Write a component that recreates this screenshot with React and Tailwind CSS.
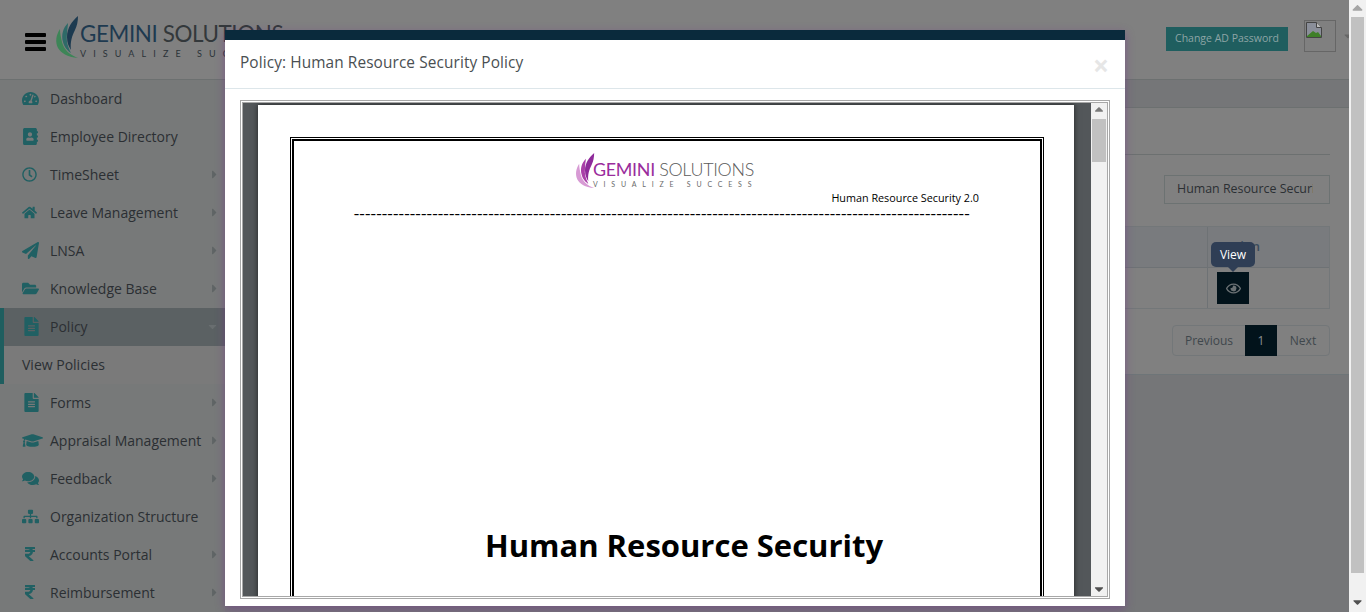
import React from "react";
import {
  FaTachometerAlt, FaAddressBook, FaRegClock, FaHome, FaPaperPlane, FaFolderOpen, FaFileAlt,
  FaGraduationCap, FaComments, FaSitemap, FaRupeeSign, FaRegEye, FaCaretRight, FaCaretDown,
} from "react-icons/fa";

const items = [
  { label: "Dashboard", Icon: FaTachometerAlt, size: "text-[17px]" },
  { label: "Employee Directory", Icon: FaAddressBook, size: "text-[17px]" },
  { label: "TimeSheet", Icon: FaRegClock, size: "text-[15px]", caret: true },
  { label: "Leave Management", Icon: FaHome, size: "text-[15px]", caret: true },
  { label: "LNSA", Icon: FaPaperPlane, size: "text-[17px]", caret: true },
  { label: "Knowledge Base", Icon: FaFolderOpen, size: "text-[17px]", caret: true },
  { label: "Policy", Icon: FaFileAlt, size: "text-[19px]", open: true },
  { label: "Forms", Icon: FaFileAlt, size: "text-[19px]", caret: true },
  { label: "Appraisal Management", Icon: FaGraduationCap, size: "text-[21px]", caret: true },
  { label: "Feedback", Icon: FaComments, size: "text-[17px]", caret: true },
  { label: "Organization Structure", Icon: FaSitemap, size: "text-[17px]" },
  { label: "Accounts Portal", Icon: FaRupeeSign, size: "text-[16px]", caret: true },
  { label: "Reimbursement", Icon: FaRupeeSign, size: "text-[16px]", caret: true },
];

function Feather({ className, c1, c2, c3 }) {
  return (
    <svg viewBox="0 0 24 42" className={className}>
      <path d="M23 0C17 5 12 12 12 21c0 6 2 10 4 13-1-8 1-14 4-20 2-4 3-9 3-14z" fill={c1} />
      <path d="M13 7C8 12 6 19 8 26c1 5 5 9 8 11-3-6-5-12-4-19 0-4 1-8 1-11z" fill={c2} />
      <path d="M5 13C1 19 0 26 3 32c3 5 9 9 20 10-8-3-14-8-16-16-1-4-2-9-2-13z" fill={c3} />
    </svg>
  );
}

function SideItem({ label, Icon, size, caret, open }) {
  return (
    <div className={`h-[38px] pb-[2px] flex items-center ${open ? "bg-[#5b6163] border-l-4 border-[#1f5e5f] pl-[18px]" : "pl-[22px]"}`}>
      <span className="w-[28px] flex items-center shrink-0">
        <Icon className={`text-[#206063] ${size}`} />
      </span>
      <span className="text-[14px] text-[#2b2f33] whitespace-nowrap">{label}</span>
      {caret && <FaCaretRight className="ml-auto mr-[4px] text-[#5f6465] text-[13px] shrink-0" />}
      {open && <FaCaretDown className="ml-auto mr-[6px] text-[#696e70] text-[13px] shrink-0" />}
    </div>
  );
}

function Sidebar() {
  return (
    <aside className="w-[225px] shrink-0 bg-[#777979] overflow-hidden">
      {items.slice(0, 7).map((it) => <SideItem key={it.label} {...it} />)}
      <div className="h-[38px] pb-[2px] flex items-center bg-[#7a7a7a] border-l-4 border-[#1f5e5f] pl-[18px] text-[14px] text-[#2b2f33]">View Policies</div>
      {items.slice(7).map((it) => <SideItem key={it.label} {...it} />)}
    </aside>
  );
}

function Header() {
  return (
    <header className="h-[80px] shrink-0 bg-[#808080] border-b border-[#6c7070] flex items-center pl-[25px] overflow-hidden">
      <div className="w-[21px] flex flex-col gap-[3px] mr-[9px] mt-[4px]">
        <span className="h-[4px] bg-black rounded-[1px]" />
        <span className="h-[4px] bg-black rounded-[1px]" />
        <span className="h-[4px] bg-black rounded-[1px]" />
      </div>
      <div className="flex items-start h-[42px] mt-[-5px]">
        <Feather className="w-[24px] h-[42px] shrink-0" c1="#1c3a50" c2="#2e6a68" c3="#3d8557" />
        <div className="ml-px pt-[5px] font-['Lato',sans-serif] whitespace-nowrap">
          <div className="text-[22.4px] leading-[26px] tracking-[-0.4px] text-[#1e3a50]">GEMINI <span className="text-[#33383b]">SOLUTIONS</span></div>
          <div className="text-[9px] leading-[10px] tracking-[7.1px] text-[#2b3338] mt-[2px]">VISUALIZE SUCCESS</div>
        </div>
      </div>
      <div className="ml-auto flex items-start mb-[8px] mr-[-5px]">
        <button className="h-[24px] w-[122px] pt-px bg-[#1f5e5f] text-[#8ea5a6] text-[10.5px] mt-[7px] mr-[16px]">Change AD Password</button>
        <div className="w-[32px] h-[32px] border border-[#666] p-px">
          <svg viewBox="0 0 16 16" className="w-[16px] h-[16px]">
            <path d="M0.5 0.5h10l5 5v10h-15z" fill="#8a8e99" stroke="#444" />
            <path d="M1 14l6-5 3 2 2-1 3 4v1H1z" fill="#3f7f28" />
            <path d="M10.5 0.5v5h5" fill="#bbb" stroke="#444" />
          </svg>
        </div>
        <FaCaretDown className="text-[#666] text-[12px] mt-[10px] ml-[6px] shrink-0" />
      </div>
    </header>
  );
}

function Content() {
  return (
    <main className="flex-1 min-w-0 flex flex-col bg-[#757678]">
      <div className="h-[28px] shrink-0 border-b border-[#6c7070]" />
      <section className="bg-[#808080] border-b border-[#6e7578] pl-[20px] pr-[19px] pb-[18px]">
        <div className="h-[47px] border-b border-[#6c7070]" />
        <div className="flex justify-end mt-[20px]">
          <div className="w-[166px] h-[29px] pb-px border border-[#6c7272] flex items-center pl-[12px] pr-[16px] text-[12.4px] text-[#2b2f33] whitespace-nowrap">
            <span className="overflow-hidden">Human Resource Security Policy</span>
          </div>
        </div>
        <div className="mt-[22px] border border-[#737779] text-[13px]">
          <div className="flex h-[41px] bg-[#797b7e] border-b border-[#6e7275]">
            <div className="flex-1" />
            <div className="w-[122px] border-l border-[#6e7275] flex items-center pl-[12px] font-semibold text-[#3a4b5c] relative">
              Action
              <div className="absolute left-[3px] top-[15px] w-[44px] h-[25px] rounded-[5px] bg-[#2f3e55] text-white text-[12px] flex items-center justify-center font-normal">
                View
                <span className="absolute left-[17px] top-[25px] w-0 h-0 border-x-[5px] border-x-transparent border-t-[5px] border-t-[#2f3e55]" />
              </div>
            </div>
          </div>
          <div className="flex h-[40px]">
            <div className="flex-1" />
            <div className="w-[122px] border-l border-[#6e7275] flex items-center pl-[9px]">
              <button className="w-[32px] h-[32px] bg-[#02131b] flex items-center justify-center">
                <FaRegEye className="text-[#6b7174] text-[15px]" />
              </button>
            </div>
          </div>
        </div>
        <div className="flex justify-end mt-[16px]">
          <div className="flex h-[31px] border border-[#737779] rounded-[4px] text-[12px] text-[#3f474c] items-stretch">
            <span className="w-[72px] flex items-center justify-center">Previous</span>
            <span className="w-[32px] bg-[#02131b] text-[#8a9091] flex items-center justify-center my-[-1px]">1</span>
            <span className="w-[52px] flex items-center justify-center">Next</span>
          </div>
        </div>
      </section>
    </main>
  );
}

function PdfPage() {
  return (
    <div className="ml-[15px] mr-[17px] bg-white shadow-[0_0_6px_rgba(0,0,0,0.6)] pl-[32px] pr-[30px] pt-[32px] h-[600px] mt-[2px] overflow-hidden">
      <div className="border border-black p-px h-[620px]">
        <div className="border-2 border-black h-[616px] flex flex-col font-['Open_Sans',sans-serif] text-black">
          <div className="h-[37px] mt-[12px] ml-[281px] flex items-start">
            <Feather className="w-[20px] h-[35px] shrink-0" c1="#8e2a9a" c2="#a93fa8" c3="#d79ad4" />
            <div className="font-['Lato',sans-serif] whitespace-nowrap pt-[6px] ml-[-2px]">
              <div className="text-[17.9px] leading-[20px] tracking-[-0.3px] text-[#9a2c9c]">GEMINI <span className="text-[#5a5a5a] font-light">SOLUTIONS</span></div>
              <div className="text-[7px] leading-[8px] tracking-[5.8px] text-[#6a6a6a] mt-[1px]">VISUALIZE SUCCESS</div>
            </div>
          </div>
          <div className="self-end mr-[61px] text-[10.8px] leading-[14px] mt-[1px] whitespace-nowrap">Human Resource Security 2.0</div>
          <div className="ml-[60px] w-[616px] h-[14px] mt-[1px] whitespace-nowrap text-[10px] leading-[14px] font-bold tracking-[0.6px]">
            {"–".repeat(110)}
          </div>
          <div className="mt-[303px] ml-[34px] text-center text-[31px] leading-[44px] font-bold whitespace-nowrap">Human Resource Security</div>
        </div>
      </div>
    </div>
  );
}

function Modal() {
  return (
    <div className="absolute left-[225px] top-[30px] w-[900px] h-[576px] bg-white border-t-[10px] border-[#0a2a3c] shadow-[0_3px_9px_rgba(110,40,140,0.45)] flex flex-col">
      <div className="h-[49px] shrink-0 border-b border-[#dde6ea] flex items-center justify-between pl-[15px] pr-[16px] pb-[2px]">
        <span className="text-[15.4px] text-[#4a4f52] font-['Open_Sans',sans-serif] tracking-[0.1px]">Policy: Human Resource Security Policy</span>
        <span className="text-[#e6e6e6] text-[28px] font-bold leading-none mt-[4px]">×</span>
      </div>
      <div className="mx-[15px] mt-[11px] h-[499px] border-[3px] border-double border-[#a8a8a8] flex overflow-hidden">
        <div className="flex-1 min-w-0 bg-[#53575a] overflow-hidden">
          <PdfPage />
        </div>
        <div className="w-[16px] shrink-0 bg-[#f1f1f1] flex flex-col items-center">
          <FaCaretDown className="rotate-180 text-[#7a7a7a] text-[10px] h-[14px]" />
          <div className="w-[14px] h-[43px] bg-[#c1c1c1] mt-[2px]" />
          <FaCaretDown className="mt-auto text-[#505050] text-[10px] h-[14px]" />
        </div>
      </div>
    </div>
  );
}

export default function App() {
  return (
    <div className="relative w-[1366px] h-[612px] overflow-hidden flex font-['Open_Sans',sans-serif] bg-white">
      <div className="w-[1349px] shrink-0 h-full flex flex-col">
        <Header />
        <div className="flex flex-1 min-h-0">
          <Sidebar />
          <Content />
        </div>
      </div>
      <div className="flex-1 flex flex-col items-center pl-[2px] pr-[2px] bg-[#f1f1f1]">
        <FaCaretDown className="rotate-180 text-[#a5a5a5] text-[11px] h-[17px] shrink-0" />
        <div className="w-full h-[556px] bg-[#c1c1c1] shrink-0" />
        <FaCaretDown className="mt-auto mb-[3px] text-[#505050] text-[11px] h-[14px] shrink-0" />
      </div>
      <Modal />
    </div>
  );
}
